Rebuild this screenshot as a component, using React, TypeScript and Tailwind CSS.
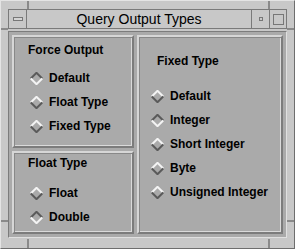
import React from 'react';

// Motif-style diamond toggle
const Diamond: React.FC<{ on?: boolean }> = ({ on }) => {
  const top = on ? '#5a5a5a' : '#f4f4f4';
  const bottom = on ? '#f4f4f4' : '#5a5a5a';
  return (
    <svg width="13" height="13" viewBox="0 0 13 13" aria-hidden="true">
      <polygon points="6.5,0.5 12.5,6.5 6.5,12.5 0.5,6.5" fill="#aaaaaa" />
      <polyline points="0.8,6.5 6.5,0.8 12.2,6.5" fill="none" stroke={top} strokeWidth="2" />
      <polyline points="0.8,6.5 6.5,12.2 12.2,6.5" fill="none" stroke={bottom} strokeWidth="2" />
    </svg>
  );
};

const Radio: React.FC<{ label: string; on?: boolean }> = ({ label, on }) => (
  <div className="flex items-center h-[24px]">
    <Diamond on={on} />
    <span className="ml-[6px]">{label}</span>
  </div>
);

const panel = 'bg-[#aaaaaa] border-2 border-t-[#d6d6d6] border-l-[#d6d6d6] border-b-[#7c7c7c] border-r-[#7c7c7c] shadow-[inset_1px_1px_0_#888,inset_-1px_-1px_0_#dadada]';

export default function App() {
  return (
    <div className="w-[295px] h-[249px] bg-[#c8c8c8] relative flex flex-col px-[7px] pt-[8px] pb-[10px] border border-t-[#e4e4e4] border-l-[#e4e4e4] border-b-[#6e6e6e] border-r-[#6e6e6e] font-['Liberation_Sans',Arial,sans-serif] text-black select-none">
      {/* frame resize-corner marks */}
      <div className="absolute left-[26px] top-0 w-[2px] h-[8px] bg-[#8a8a8a]" />
      <div className="absolute right-[24px] top-0 w-[2px] h-[8px] bg-[#8a8a8a]" />
      <div className="absolute left-[26px] bottom-0 w-[2px] h-[9px] bg-[#8a8a8a]" />
      <div className="absolute right-[24px] bottom-0 w-[2px] h-[9px] bg-[#8a8a8a]" />
      <div className="absolute left-0 top-[27px] w-[7px] h-[2px] bg-[#8a8a8a]" />
      <div className="absolute right-0 top-[27px] w-[7px] h-[2px] bg-[#8a8a8a]" />
      <div className="absolute left-0 bottom-[26px] w-[7px] h-[2px] bg-[#8a8a8a]" />
      <div className="absolute right-0 bottom-[26px] w-[7px] h-[2px] bg-[#8a8a8a]" />

      {/* title bar */}
      <div className="flex h-[20px] border border-[#7a7a7a]">
        <div className="w-[18px] flex items-center justify-center border-r border-[#7a7a7a]">
          <div className="w-[10px] h-[4px] border border-[#777] bg-[#d4d4d4]" />
        </div>
        <div className="flex-1 flex items-center justify-center text-[14px] leading-none">Query Output Types</div>
        <div className="w-[18px] flex items-center justify-center border-l border-[#7a7a7a]">
          <div className="w-[4px] h-[4px] border border-[#777]" />
        </div>
        <div className="w-[17px] flex items-center justify-center border-l border-[#7a7a7a]">
          <div className="w-[11px] h-[11px] border border-[#777]" />
        </div>
      </div>

      {/* work area */}
      <div className="mt-[2px] flex-1 flex gap-[3px] bg-[#aaaaaa] p-[3px] border border-t-[#7c7c7c] border-l-[#7c7c7c] border-b-[#e0e0e0] border-r-[#e0e0e0] text-[12px] font-bold">
        <div className="w-[122px] flex flex-col gap-[3px]">
          <div className={`${panel} h-[113px] pl-[14px] pt-[4px]`}>
            <div className="mb-[7px] h-[18px] flex items-center">Force Output</div>
            <div className="pl-[2px]">
              <Radio label="Default" on />
              <Radio label="Float Type" />
              <Radio label="Fixed Type" />
            </div>
          </div>
          <div className={`${panel} flex-1 pl-[14px] pt-[1px]`}>
            <div className="mb-[9px] h-[18px] flex items-center">Float Type</div>
            <div className="pl-[2px]">
              <Radio label="Float" />
              <Radio label="Double" on />
            </div>
          </div>
        </div>
        <div className={`${panel} flex-1 pl-[12px] pt-[15px]`}>
          <div className="pl-[6px] mb-[14px] h-[18px] flex items-center">Fixed Type</div>
          <Radio label="Default" />
          <Radio label="Integer" on />
          <Radio label="Short Integer" />
          <Radio label="Byte" />
          <Radio label="Unsigned Integer" />
        </div>
      </div>
    </div>
  );
}
